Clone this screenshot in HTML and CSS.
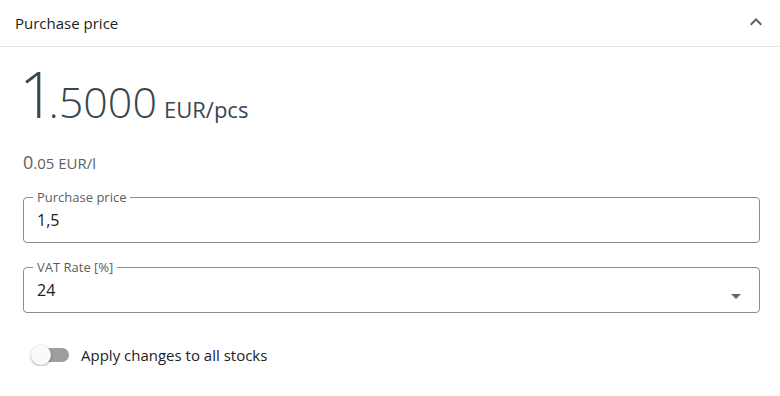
FILE: index.html
```html
<!DOCTYPE html>
<html>
<head>
<meta charset="utf-8">
<link rel="stylesheet" href="styles.css">
</head>
<body>
<div class="panel">
  <div class="header">
    <span class="title">Purchase price</span>
    <svg class="chev" viewBox="0 0 24 24" width="24" height="24"><path d="M12 8l-6 6 1.41 1.41L12 10.83l4.59 4.58L18 14z" fill="#5f5f5f"/></svg>
  </div>
  <div class="body">
    <div class="price">
      <span class="p-int">1</span><span class="p-dec">.5000</span><span class="p-unit">EUR/pcs</span>
    </div>
    <div class="sub">
      <span class="s-int">0</span><span class="s-dec">.05 EUR/l</span>
    </div>
    <fieldset class="field">
      <legend>Purchase price</legend>
      <div class="value">1,5</div>
    </fieldset>
    <fieldset class="field select">
      <legend>VAT Rate [%]</legend>
      <div class="value">24</div>
      <svg class="arrow" viewBox="0 0 24 24" width="24" height="24"><path d="M7 10l5 5 5-5z" fill="#6a6a6a"/></svg>
    </fieldset>
    <div class="switch-row">
      <span class="switch"><span class="track"></span><span class="knob"></span></span>
      <span class="switch-label">Apply changes to all stocks</span>
    </div>
  </div>
</div>
</body>
</html>
```
FILE: styles.css
```css
* { box-sizing: border-box; }
body {
  margin: 0;
  background: #fff;
  font-family: "Open Sans", "Noto Sans", sans-serif;
  color: #212121;
}
.header {
  height: 47px;
  border-bottom: 1px solid #e4e4e4;
  display: flex;
  align-items: center;
  justify-content: space-between;
  padding: 0 12px 0 15px;
}
.title {
  font-size: 15px;
  font-weight: 500;
  color: #222;
}
.chev { display: block; margin-top: -2px; }
.body {
  padding: 0 20px 0 23px;
}
.price {
  display: flex;
  align-items: baseline;
  color: #37474f;
  height: 85px;
  line-height: 1;
  padding-top: 15px;
}
.p-int { font-size: 64px; font-weight: 300; letter-spacing: -7px; margin-left: -4px; }
.p-dec { font-size: 43px; font-weight: 300; }
.p-unit { font-size: 22px; margin-left: 7px; font-weight: 400; }
.sub {
  display: flex;
  align-items: baseline;
  color: #616161;
  margin-top: 18px;
  height: 39px;
}
.s-int { font-size: 18px; }
.s-dec { font-size: 15px; }
.field {
  margin: 0 0 16px 0;
  padding: 5px 13px 12px 13px;
  border: 1px solid #8c8c8c;
  border-radius: 4px;
  position: relative;
  min-width: 0;
}
.field legend {
  font-size: 13px;
  line-height: 16px;
  color: #5e5e5e;
  padding: 0 4px;
  margin-left: -4px;
}
.value {
  font-size: 16px;
  line-height: 20px;
  color: #212121;
}
.arrow {
  position: absolute;
  right: 11px;
  top: 9px;
}
.switch-row {
  display: flex;
  align-items: center;
  margin-top: 31px;
  padding-left: 8px;
}
.switch {
  position: relative;
  width: 38px;
  height: 22px;
  margin-right: 12px;
}
.track {
  position: absolute;
  left: 3px;
  top: 4px;
  width: 35px;
  height: 14px;
  border-radius: 7px;
  background: #9e9e9e;
}
.knob {
  position: absolute;
  left: 0;
  top: 1px;
  width: 20px;
  height: 20px;
  border-radius: 50%;
  background: #fafafa;
  box-shadow: 0 1px 3px rgba(0,0,0,0.35);
}
.switch-label {
  font-size: 15px;
  color: #222;
}
```
